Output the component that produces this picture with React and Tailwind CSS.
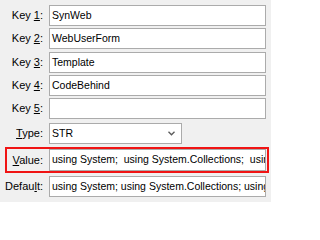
const font = { fontFamily: '"Liberation Sans", Arial, sans-serif' };

const Label = ({ pre, hot, post, className = "w-[43px]" }) => (
  <div className={`${className} shrink-0 text-right text-[11px] text-black`}>
    {pre}
    <u className="underline-offset-[1px]">{hot}</u>
    {post}
  </div>
);

const Box = ({ children, h = "h-[21px]" }) => (
  <div className={`ml-[6px] w-[217px] ${h} shrink-0 border border-[#ababab] bg-white pl-[2px] flex items-center overflow-hidden whitespace-nowrap text-[10.5px] text-black`}>
    {children}
  </div>
);

const keys = [
  { n: "1", v: "SynWeb", mt: "mt-[5px]" },
  { n: "2", v: "WebUserForm", mt: "mt-[2px]" },
  { n: "3", v: "Template", mt: "mt-[3px]" },
  { n: "4", v: "CodeBehind", mt: "mt-[2px]" },
  { n: "5", v: "", mt: "mt-[2px]" },
];

export default function App() {
  return (
    <div className="w-[271px] h-[202px] bg-[#f0f0f0] overflow-hidden flex flex-col" style={font}>
      {keys.map((k) => (
        <div key={k.n} className={`flex items-center ${k.mt}`}>
          <Label pre="Key " hot={k.n} post=":" />
          <Box>{k.v}</Box>
        </div>
      ))}

      <div className="flex items-center mt-[4px]">
        <Label pre="" hot="T" post="ype:" />
        <div className="ml-[6px] w-[133px] h-[21px] border border-[#ababab] bg-white pl-[2px] pr-[6px] flex items-center justify-between text-[10.5px] text-black">
          <span>STR</span>
          <svg width="7" height="5" viewBox="0 0 7 5">
            <path d="M0.5 0.8 L3.5 3.8 L6.5 0.8" fill="none" stroke="#5a5a5a" strokeWidth="1.3" />
          </svg>
        </div>
      </div>

      <div className="ml-[5px] mt-[3px] w-[264px] h-[26px] border-2 border-[#f01414] flex items-center">
        <Label pre="" hot="V" post="alue:" className="w-[36px]" />
        <Box h="h-[22px]">using System;&nbsp; using System.Collections;&nbsp; using System.Web;</Box>
      </div>

      <div className="flex items-center mt-[3px]">
        <Label pre="Defau" hot="l" post="t:" />
        <Box>using System; using System.Collections; using System.Web;</Box>
      </div>
    </div>
  );
}
